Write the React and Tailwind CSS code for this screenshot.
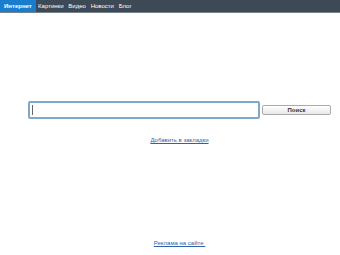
export default function App() {
  const tabs = ["Картинки", "Видео", "Новости", "Блог"];
  return (
    <div className="w-[340px] h-[255px] bg-white flex flex-col font-['Liberation_Sans',Arial,sans-serif]">
      <div className="h-[13px] bg-[#3d4954] border-b border-[#76828c] flex items-stretch text-[6px] leading-none text-white">
        <div className="bg-[#1a7ccc] font-bold px-[4px] flex items-center">Интернет</div>
        {tabs.map((t) => (
          <div key={t} className="px-[2.4px] flex items-center">{t}</div>
        ))}
      </div>
      <div className="flex-1 flex flex-col ml-[28px] w-[303px]">
        <div className="h-[88px]" />
        <div className="flex items-center">
          <div className="w-[232px] h-[18px] border-2 border-[#7fa7c9] rounded-[2px] flex items-center pl-[2px]">
            <div className="w-px h-[10px] bg-[#666]" />
          </div>
          <button className="ml-[2px] w-[69px] h-[10px] border border-[#aaa] rounded-[2px] bg-gradient-to-b from-white to-[#e8e8e8] text-[6px] font-bold text-[#333] leading-none">
            Поиск
          </button>
        </div>
        <div className="mt-[10px] text-center leading-none">
          <a className="text-[6px] leading-none text-[#2f5fb0] underline">Добавить в закладки</a>
        </div>
        <div className="flex-1" />
        <div className="mb-[7px] text-center leading-none">
          <a className="text-[6px] leading-none text-[#2f5fb0] underline whitespace-pre">Реклама на сайте </a>
        </div>
      </div>
    </div>
  );
}
